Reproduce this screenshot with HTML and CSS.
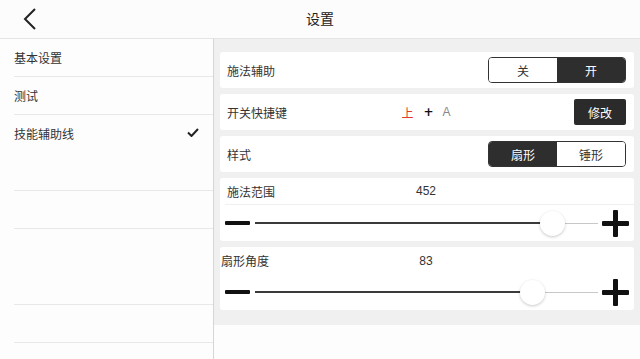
FILE: index.html
```html
<!DOCTYPE html>
<html lang="zh-CN">

<head>
    <meta charset="UTF-8">
    <meta name="viewport" content="width=device-width, initial-scale=1.0">
    <title>设置</title>
    <link rel="stylesheet" href="styles.css">
</head>

<body>
    <header class="topbar">
        <div class="back">
            <svg width="14" height="22" viewBox="0 0 14 22">
                <polyline points="12,1 2,11 12,21" fill="none" stroke="#222" stroke-width="2" />
            </svg>
        </div>
        <div class="title">设置</div>
        <div></div>
    </header>

    <div class="main">
        <!-- Left menu -->
        <aside class="menu">
            <div class="menu-item">基本设置</div>
            <div class="menu-item">测试</div>
            <div class="menu-item no-line">技能辅助线
                <svg class="check" width="12" height="9" viewBox="0 0 12 9">
                    <polyline points="1,4.5 4.5,8 11,1" fill="none" stroke="#222" stroke-width="2" />
                </svg>
            </div>
            <div class="menu-item"></div>
            <div class="menu-item"></div>
            <div class="menu-item no-line"></div>
            <div class="menu-item"></div>
            <div class="menu-item"></div>
        </aside>

        <!-- Settings panel -->
        <section class="panel">
            <div class="card row">
                <span class="label">施法辅助</span>
                <span></span>
                <div class="segment">
                    <span class="seg">关</span>
                    <span class="seg on">开</span>
                </div>
            </div>

            <div class="card row">
                <span class="label">开关快捷键</span>
                <span class="keys"><span class="key-up">上</span><span class="key-plus">+</span><span class="key-a">A</span></span>
                <button class="btn-dark">修改</button>
            </div>

            <div class="card row">
                <span class="label">样式</span>
                <span></span>
                <div class="segment">
                    <span class="seg on">扇形</span>
                    <span class="seg">锤形</span>
                </div>
            </div>

            <div class="card slider-card">
                <div class="slider-head with-line">
                    <span class="label">施法范围</span>
                    <span class="value">452</span>
                    <span></span>
                </div>
                <div class="slider">
                    <span class="minus"></span>
                    <div class="track">
                        <div class="fill" style="width: 86.6%"></div>
                        <div class="thumb" style="left: 86.6%"></div>
                    </div>
                    <span class="plus"></span>
                </div>
            </div>

            <div class="card slider-card">
                <div class="slider-head flush">
                    <span class="label">扇形角度</span>
                    <span class="value">83</span>
                    <span></span>
                </div>
                <div class="slider">
                    <span class="minus"></span>
                    <div class="track">
                        <div class="fill" style="width: 80.8%"></div>
                        <div class="thumb" style="left: 80.8%"></div>
                    </div>
                    <span class="plus"></span>
                </div>
            </div>
        </section>
    </div>
</body>

</html>
```

FILE: styles.css
```css
body {
    font-family: "Noto Sans CJK SC", "Noto Sans", sans-serif;
    margin: 0;
    padding: 0;
    background-color: #fdfdfd;
    color: #333;
    font-size: 12px;
    width: 640px;
    height: 359px;
    overflow: hidden;
}

.topbar {
    display: grid;
    grid-template-columns: 1fr auto 1fr;
    align-items: center;
    height: 38px;
    border-bottom: 1px solid #e4e4e4;
    background-color: #fcfcfc;
}

.back {
    display: flex;
    align-items: center;
    padding-left: 23px;
}

.title {
    font-size: 14px;
    color: #222;
    padding-bottom: 2px;
}

.main {
    display: flex;
    align-items: flex-start;
    height: 320px;
}

.menu {
    width: 213px;
    height: 100%;
    border-right: 1px solid #d6d6d6;
    background-color: #fdfdfd;
}

.menu-item {
    display: flex;
    align-items: center;
    justify-content: space-between;
    height: 38px;
    box-sizing: border-box;
    margin-left: 14px;
    padding-right: 14px;
    border-bottom: 1px solid #e8e8e8;
    color: #333;
}

.menu-item.no-line {
    border-bottom-color: transparent;
}

.check {
    margin-top: -2px;
}

.panel {
    flex: 1;
    display: flex;
    flex-direction: column;
    gap: 6px;
    padding: 13px 6px 15px 6px;
    background-color: #eff0ef;
}

.card {
    background-color: #fff;
    border-radius: 3px;
}

.row {
    display: grid;
    grid-template-columns: 1fr auto 1fr;
    align-items: center;
    height: 36px;
    padding: 0 8px 0 7px;
}

.row > :last-child {
    justify-self: end;
}

.label {
    color: #333;
}

.segment {
    display: flex;
    width: 138px;
    height: 26px;
    box-sizing: border-box;
    border: 1px solid #333;
    border-radius: 4px;
    overflow: hidden;
}

.seg {
    flex: 1;
    display: flex;
    align-items: center;
    justify-content: center;
    color: #333;
    background-color: #fff;
}

.seg.on {
    background-color: #2e2e2e;
    color: #fff;
}

.keys {
    display: flex;
    align-items: center;
    margin-left: -1px;
}

.key-up {
    color: #e5392c;
}

.key-plus {
    margin-left: 10px;
    font-family: "DejaVu Sans", sans-serif;
    font-weight: bold;
    color: #111;
}

.key-a {
    margin-left: 9px;
    font-family: "Liberation Sans", sans-serif;
    color: #888;
}

.btn-dark {
    width: 52px;
    height: 26px;
    border: none;
    border-radius: 2px;
    background-color: #2b2b2b;
    color: #fff;
    font-family: inherit;
    font-size: 12px;
    padding: 0;
}

.slider-card {
    height: 63px;
    display: flex;
    flex-direction: column;
}

.slider-head {
    display: grid;
    grid-template-columns: 1fr auto 1fr;
    align-items: center;
    height: 27px;
    box-sizing: border-box;
}

.slider-head.with-line {
    border-bottom: 1px solid #f0f0f0;
    margin-left: 5px;
    padding: 0 9px 0 2px;
}

.slider-head.flush {
    padding: 0 3px 0 1px;
}

.value {
    font-family: "Liberation Sans", sans-serif;
    font-size: 12px;
    color: #333;
}

.slider {
    flex: 1;
    display: flex;
    align-items: center;
    padding: 0 5px;
}

.minus {
    width: 25px;
    height: 4px;
    background-color: #111;
    border-radius: 1px;
}

.track {
    position: relative;
    flex: 1;
    height: 1px;
    margin: 0 4px 0 5px;
    background-color: #c8c8c8;
}

.fill {
    position: absolute;
    left: 0;
    top: -0.5px;
    height: 2px;
    background-color: #3a3a3a;
}

.thumb {
    position: absolute;
    top: 0;
    width: 25px;
    height: 25px;
    margin-left: -12.5px;
    margin-top: -12px;
    border-radius: 50%;
    background-color: #fff;
    box-shadow: 0 1px 3px rgba(0, 0, 0, 0.22);
}

.plus {
    position: relative;
    width: 27px;
    height: 27px;
}

.plus::before,
.plus::after {
    content: "";
    position: absolute;
    background-color: #111;
    border-radius: 1px;
}

.plus::before {
    left: 0;
    right: 0;
    top: 11px;
    height: 5px;
}

.plus::after {
    top: 0;
    bottom: 0;
    left: 11px;
    width: 5px;
}
```
